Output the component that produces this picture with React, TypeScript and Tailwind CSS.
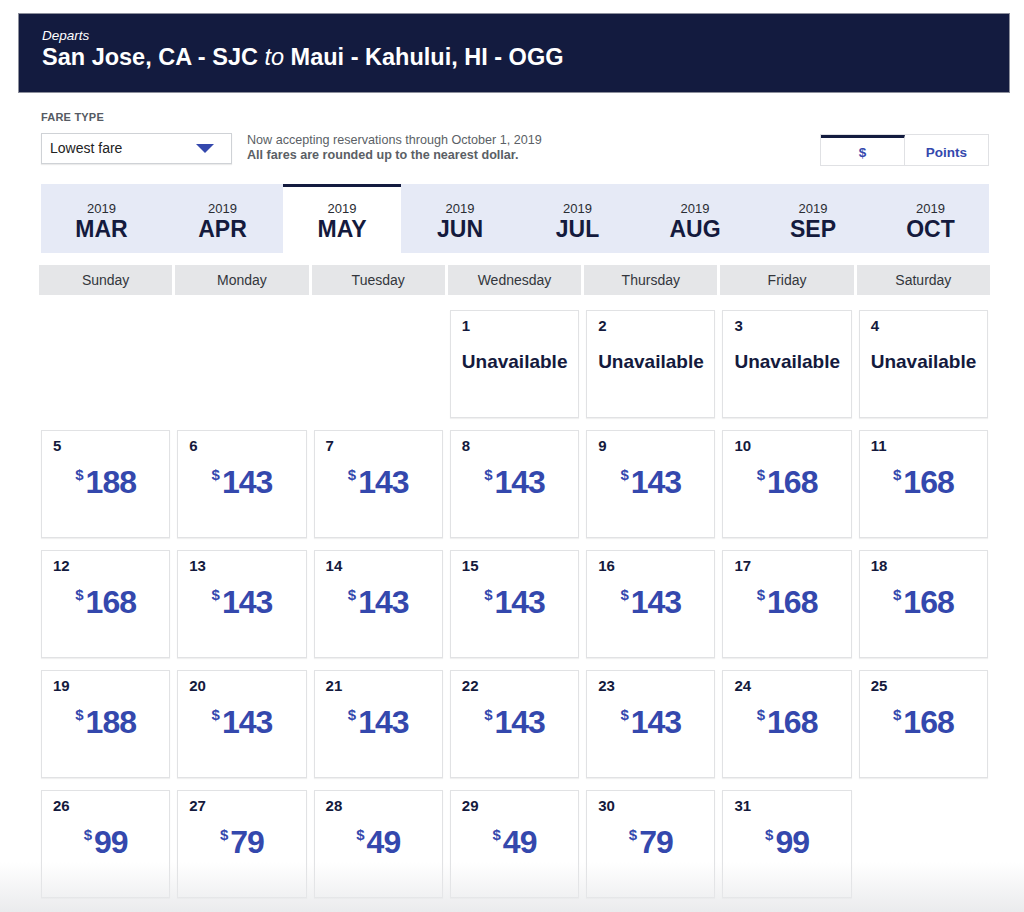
import React from "react";

const months = ["MAR", "APR", "MAY", "JUN", "JUL", "AUG", "SEP", "OCT"];
const days = ["Sunday", "Monday", "Tuesday", "Wednesday", "Thursday", "Friday", "Saturday"];

const prices: Record<number, number> = {
  5: 188, 6: 143, 7: 143, 8: 143, 9: 143, 10: 168, 11: 168,
  12: 168, 13: 143, 14: 143, 15: 143, 16: 143, 17: 168, 18: 168,
  19: 188, 20: 143, 21: 143, 22: 143, 23: 143, 24: 168, 25: 168,
  26: 99, 27: 79, 28: 49, 29: 49, 30: 79, 31: 99,
};

type Cell = { day: number | null };

function buildCells(): Cell[] {
  const cells: Cell[] = [];
  for (let i = 0; i < 3; i++) cells.push({ day: null });
  for (let d = 1; d <= 31; d++) cells.push({ day: d });
  while (cells.length % 7 !== 0) cells.push({ day: null });
  return cells;
}

export default function App() {
  const cells = buildCells();
  return (
    <div className="relative w-[1024px] h-[912px] overflow-hidden bg-white font-['Liberation_Sans',Arial,sans-serif]">
      {/* Header */}
      <div className="ml-[18px] mt-[13px] w-[992px] h-[80px] border border-[#8c8f9c] bg-[#131b3f] pl-[23px] pt-[14px] text-white">
        <div className="text-[13.5px] italic leading-[15px]">Departs</div>
        <div className="text-[23.5px] font-bold leading-[28px]">
          San Jose, CA - SJC <span className="font-normal italic">to</span> Maui - Kahului, HI - OGG
        </div>
      </div>

      <div className="ml-[39px] w-[951px]">
        {/* Fare type row */}
        <div className="flex items-end mt-[18px] pl-[2px]">
          <div className="flex flex-col">
            <div className="text-[11px] font-bold text-[#555a63] uppercase leading-[13px] tracking-[0.2px]">Fare Type</div>
            <div className="mt-[9px] w-[191px] h-[31px] border border-[#cfd2d6] shadow-[0_1px_1px_rgba(0,0,0,0.08)] flex items-center justify-between pl-[8px] pr-[17px] bg-white">
              <span className="text-[14px] text-[#222]">Lowest fare</span>
              <svg width="18" height="9" viewBox="0 0 18 9">
                <polygon points="0,0 18,0 9,9" fill="#3448ad" />
              </svg>
            </div>
          </div>
          <div className="ml-[15px] mb-[1px] text-[12.6px] leading-[15px] text-[#5b5f66]">
            <div>Now accepting reservations through October 1, 2019</div>
            <div className="font-bold">All fares are rounded up to the nearest dollar.</div>
          </div>
          <div className="ml-auto mr-[1px] mb-[-2px] flex h-[32px] border border-[#e0e1e4]">
            <div className="w-[84px] border-t-[3px] border-[#131b3f] pt-[3px] flex items-center justify-center text-[13.5px] font-bold text-[#3448ad] border-r border-r-[#e0e1e4]">$</div>
            <div className="w-[83px] pt-[6px] flex items-center justify-center text-[13.5px] font-bold text-[#3448ad]">Points</div>
          </div>
        </div>

        {/* Month tabs */}
        <div className="mt-[20px] ml-[2px] w-[948px] h-[69px] flex bg-[#e6eaf6]">
          {months.map((m, i) => {
            const sel = m === "MAY";
            const widths = ["w-[121px]", "w-[121px]", "w-[118px]", "w-[118px]", "w-[117px]", "w-[118px]", "w-[118px]", "w-[117px]"];
            return (
              <div
                key={m}
                className={
                  (sel
                    ? "bg-white border-t-[3px] border-[#131b3f] flex flex-col items-center pt-[14px] "
                    : "flex flex-col items-center pt-[17px] ") + widths[i]
                }
              >
                <div className="text-[13px] leading-[15px] text-[#2a2d33]">2019</div>
                <div className="text-[23px] leading-[27px] font-bold text-[#141a3d]">{m}</div>
              </div>
            );
          })}
        </div>

        {/* Day headers */}
        <div className="mt-[12px] grid grid-cols-7 gap-[3px]">
          {days.map((d) => (
            <div key={d} className="h-[30px] bg-[#e5e6e8] flex items-center justify-center text-[14px] text-[#33363c]">
              {d}
            </div>
          ))}
        </div>

        {/* Calendar */}
        <div className="mt-[15px] grid grid-cols-7 gap-x-[3px] gap-y-[12px]">
          {cells.map((c, i) => (
            <div key={i} className="px-[2px]">
              {c.day === null ? (
                <div className="h-[108px]" />
              ) : (
                <div className="h-[108px] border border-[#e1e2e4] shadow-[0_1px_1px_rgba(0,0,0,0.06)] bg-white pl-[11px] pt-[6px]">
                  <div className="text-[15px] font-bold leading-[18px] text-[#141a3d]">{c.day}</div>
                  {prices[c.day] ? (
                    <div className="mt-[10px] pr-[11px] flex justify-center items-start text-[#3448ad] font-bold">
                      <span className="text-[15px] leading-[16px] mt-[2px] mr-[2px]">$</span>
                      <span className="text-[32px] leading-[34px] tracking-[-1px]">{prices[c.day]}</span>
                    </div>
                  ) : (
                    <div className="mt-[16px] text-[19px] font-bold leading-[22px] text-[#141a3d]">Unavailable</div>
                  )}
                </div>
              )}
            </div>
          ))}
        </div>
      </div>

      {/* Bottom fade */}
      <div className="pointer-events-none absolute left-0 right-0 bottom-0 h-[50px] bg-gradient-to-b from-[rgba(240,241,242,0)] to-[rgba(232,233,235,0.9)]" />
    </div>
  );
}
